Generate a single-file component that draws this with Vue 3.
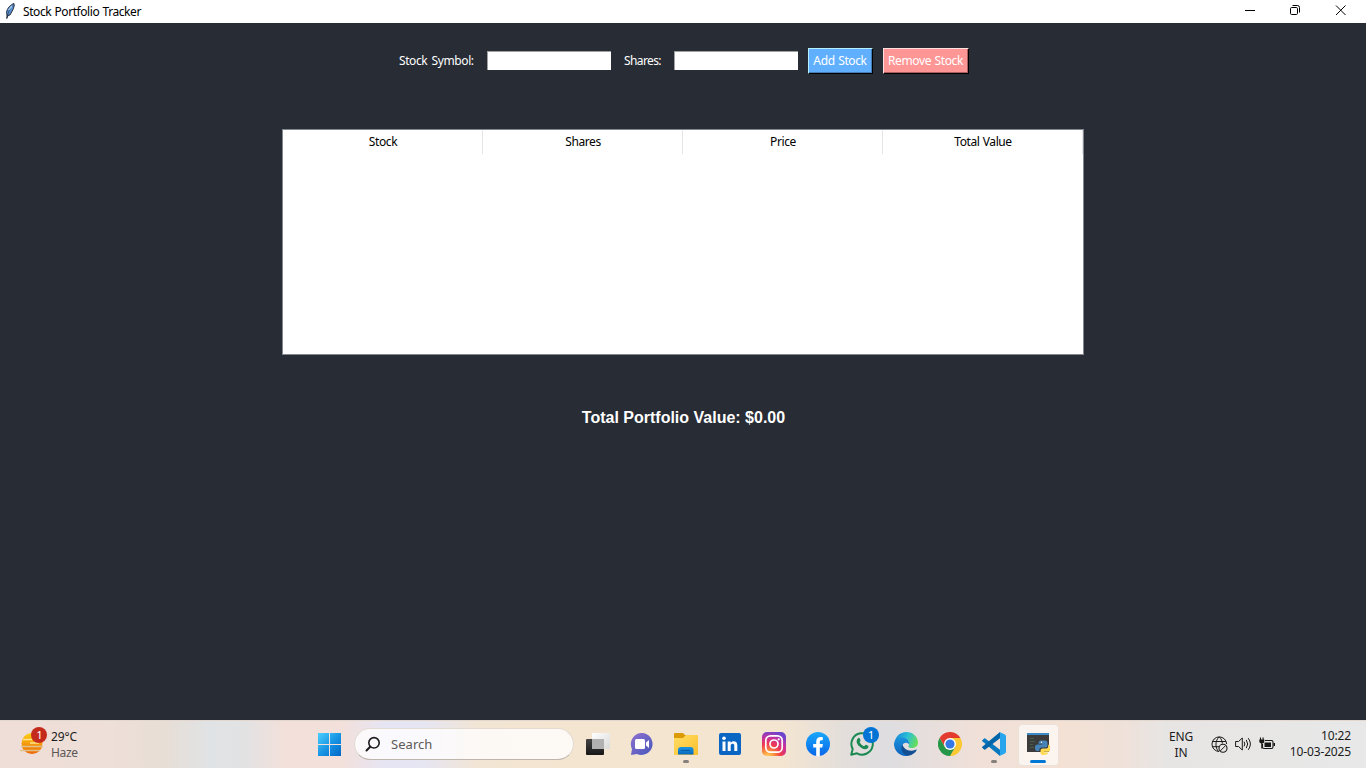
<script setup>
const columns = ['Stock', 'Shares', 'Price', 'Total Value']
</script>

<template>
  <div class="screen">
    <header class="titlebar">
      <svg class="feather" width="10" height="16" viewBox="0 0 10 16">
        <path d="M9 .5C5.500 1.500 2 5.500 1.500 9.500L2 12l-.2 3.500L3 12.500l2-.5 2.200-4L8 6.500 9.200 3z" fill="#5b91d0" stroke="#17202c" stroke-width=".9" />
        <path d="M8 2.500C5.500 5 3.500 8 2.300 13" fill="none" stroke="#17202c" stroke-width=".6" />
        <path d="M7 3L3.700 7" stroke="#a5cdf2" stroke-width="1.200" />
      </svg>
      <span class="caption">Stock Portfolio Tracker</span>
      <div class="controls">
        <svg width="46" height="22" viewBox="0 0 46 22"><path d="M18 10.500h10" stroke="#000" /></svg>
        <svg width="46" height="22" viewBox="0 0 46 22" fill="none" stroke="#000">
          <rect x="17.500" y="7.500" width="7" height="7" rx="1.200" />
          <path d="M19.500 5.500h5q2 0 2 2v5" />
        </svg>
        <svg width="46" height="22" viewBox="0 0 46 22"><path d="M17 5.500l9.500 9.500M26.500 5.500L17 15" stroke="#000" /></svg>
      </div>
    </header>

    <main class="content">
      <div class="form">
        <label class="lbl sym">Stock Symbol:</label>
        <input class="entry" type="text" />
        <label class="lbl sh">Shares:</label>
        <input class="entry" type="text" />
        <button class="btn add"><span>Add Stock</span></button>
        <button class="btn remove"><span>Remove Stock</span></button>
      </div>
      <div class="tree">
        <div class="head">
          <div v-for="c in columns" :key="c" class="col"><span>{{ c }}</span></div>
        </div>
      </div>
      <div class="total">Total Portfolio Value: $0.00</div>
    </main>

    <footer class="taskbar">
      <div class="weather">
        <svg width="30" height="32" viewBox="0 0 30 32">
          <defs>
            <linearGradient id="sun" x1="0" y1="0" x2="0" y2="1"><stop offset="0" stop-color="#fcd116" /><stop offset="1" stop-color="#ed6605" /></linearGradient>
          </defs>
          <circle cx="14" cy="16.500" r="10.500" fill="url(#sun)" />
          <path d="M5 12.500h9M12 16h9" stroke="#ffe28b" stroke-width="1.300" />
          <path d="M3 19.500h12M9 19.500h16M2 23.500h20" stroke="#dfc28a" stroke-width="1.600" />
          <circle cx="21" cy="8" r="8" fill="#c42b1c" />
          <text x="21.500" y="12" text-anchor="middle" font-size="11.500" fill="#fff">1</text>
        </svg>
        <div class="wtext"><span class="temp">29°C</span><span class="haze">Haze</span></div>
      </div>

      <div class="cell start">
        <svg width="24" height="24" viewBox="0 0 24 24">
          <defs><linearGradient id="win" x1="0" y1="0" x2="1" y2="1"><stop offset="0" stop-color="#4cd0ff" /><stop offset=".5" stop-color="#1996e4" /><stop offset="1" stop-color="#0067c8" /></linearGradient></defs>
          <path d="M0 1h11v11H0zM12 1h11v11H12zM0 13h11v11H0zM12 13h11v11H12z" fill="url(#win)" />
        </svg>
      </div>

      <div class="search">
        <svg width="16" height="16" viewBox="0 0 16 16" fill="none" stroke="#1d1d1d" stroke-width="1.600" stroke-linecap="round">
          <circle cx="9" cy="6.800" r="5.200" /><path d="M5.200 10.700L1.500 14.500" stroke-width="2" />
        </svg>
        <span>Search</span>
      </div>

      <div class="apps">
        <div class="cell">
          <svg width="24" height="24" viewBox="0 0 24 24">
            <defs>
              <linearGradient id="tv" x1="0" y1="0" x2="0" y2="1"><stop offset="0" stop-color="#444" /><stop offset="1" stop-color="#171717" /></linearGradient>
              <linearGradient id="tw" x1="0" y1="0" x2="1" y2="1"><stop offset="0" stop-color="#fff" /><stop offset="1" stop-color="#d9d9d9" /></linearGradient>
            </defs>
            <rect x="0" y="7" width="18" height="16" rx="1" fill="url(#tv)" />
            <rect x="6" y="1" width="18" height="16" rx="1" fill="url(#tw)" />
            <path d="M6 7h12v10H6z" fill="#b1b1b1" />
          </svg>
        </div>
        <div class="cell">
          <svg width="24" height="24" viewBox="0 0 24 24">
            <defs><linearGradient id="chat" x1="0" y1="0" x2="1" y2="1"><stop offset="0" stop-color="#8f71d0" /><stop offset="1" stop-color="#4757bb" /></linearGradient></defs>
            <path d="M12 1a11 11 0 1 1-5 21L1 23l1-6A11 11 0 0 1 12 1z" fill="url(#chat)" />
            <rect x="5" y="7" width="10" height="10" rx="1.500" fill="#fff" /><path d="M16 10.500l3-2.500v8l-3-2.500z" fill="#fff" />
          </svg>
        </div>
        <div class="cell">
          <svg width="24" height="24" viewBox="0 0 24 24">
            <defs>
              <linearGradient id="fold" x1="0" y1="0" x2="1" y2="1"><stop offset="0" stop-color="#ffdc62" /><stop offset="1" stop-color="#fac02d" /></linearGradient>
              <linearGradient id="fb" x1="0" y1="0" x2="0" y2="1"><stop offset="0" stop-color="#1896e1" /><stop offset="1" stop-color="#0869bd" /></linearGradient>
            </defs>
            <path d="M0 2q0-1 1-1h8l2 2h3v3H0z" fill="#dc9a05" />
            <path d="M0 6h9l3-3h11q1 0 1 1v18q0 1-1 1H1q-1 0-1-1z" fill="url(#fold)" />
            <path d="M4 22.500V18q0-3 3-3h9.500q3 0 3 3v4.500z" fill="url(#fb)" /><path d="M7 18.500h9" stroke="#075aa6" />
          </svg>
          <i class="dot"></i>
        </div>
        <div class="cell">
          <svg width="24" height="24" viewBox="0 0 24 24">
            <rect x="1" y="1" width="22" height="22" rx="2" fill="#0a66c2" />
            <path d="M4.500 9.500h3V19h-3zM9.700 9.500h3v1.400c1.300-2.400 6.600-2.300 6.600 2.100v6h-3v-5.200c0-2.700-3.600-2.600-3.600 0V19h-3z" fill="#fff" /><circle cx="6" cy="6.300" r="1.800" fill="#fff" />
          </svg>
        </div>
        <div class="cell">
          <svg width="24" height="24" viewBox="0 0 24 24">
            <defs>
              <radialGradient id="ig" cx=".25" cy="1.050" r="1.100"><stop offset="0" stop-color="#ffd768" /><stop offset=".22" stop-color="#fb9a3c" /><stop offset=".5" stop-color="#f0384f" /><stop offset=".75" stop-color="#c6319d" /><stop offset="1" stop-color="#6b45cf" /></radialGradient>
            </defs>
            <rect width="24" height="24" rx="5" fill="url(#ig)" />
            <g fill="none" stroke="#fff" stroke-width="1.700"><rect x="3.800" y="3.800" width="16.400" height="16.400" rx="4.800" /><circle cx="12" cy="12" r="4" /></g><circle cx="16.700" cy="7.300" r="1.100" fill="#fff" />
          </svg>
        </div>
        <div class="cell">
          <svg width="24" height="24" viewBox="0 0 24 24">
            <defs><linearGradient id="face" x1="0" y1="0" x2="0" y2="1"><stop offset="0" stop-color="#19a8fb" /><stop offset="1" stop-color="#0866e8" /></linearGradient></defs>
            <circle cx="12" cy="12" r="12" fill="url(#face)" />
            <path d="M10.200 24v-8.500H7.200V12h3v-2.200c0-3.700 2-5.300 6.600-4.600v3.100c-2.300-.2-3 .1-3 1.700v2h3.100l-.6 3.500h-2.500V24z" fill="#fff" />
          </svg>
        </div>
        <div class="cell">
          <svg width="24" height="24" viewBox="0 0 24 24">
            <path d="M1.200 22.800l1.500-5.800a10.700 10.700 0 1 1 4.300 4.300z" fill="none" stroke="#1a8a52" stroke-width="2" stroke-linejoin="round" />
            <path d="M7.800 6.400c1-1 1.700-.7 2.100.4l.7 1.800c0 .6-1.100 1.200-.9 1.700 1 2 2.400 3.300 4.300 4 .8 0 1.200-1.700 2-1.500l2.100 1c.8.400.3 2-.5 2.700-3 2-6.300-.3-8.300-2.200C7.400 12.400 5.200 9.200 7.800 6.400z" fill="#1a8a52" />
          </svg>
          <b class="badge">1</b>
        </div>
        <div class="cell">
          <svg width="24" height="24" viewBox="0 0 24 24">
            <defs>
              <linearGradient id="e1" x1="0" y1=".3" x2="1" y2=".6"><stop offset="0" stop-color="#1689d8" /><stop offset=".5" stop-color="#2bbfd5" /><stop offset="1" stop-color="#69df55" /></linearGradient>
              <linearGradient id="e2" x1="0" y1="0" x2="0" y2="1"><stop offset="0" stop-color="#1a91dc" /><stop offset="1" stop-color="#1063bc" /></linearGradient>
            </defs>
            <path d="M.500 10C2 3.500 7 0 12.300 0 19 0 24 5 24 10.500c0 4-3.500 5.800-7 5.500-2-.2-3-.8-2.600-1.700 1.500-2 1-6-3-7.500C7.500 5.500 3 7 .500 10z" fill="url(#e1)" />
            <path d="M0 12c.5-4.500 4-6.500 7.700-6.500 5 0 8 3.500 7.500 7C13.500 10 10 10 8.500 13c-2 5 2 9.500 6.500 10.700C7 25.500 0 19.500 0 12z" fill="url(#e2)" />
            <path d="M8.500 12.500c-3 5.500 1 10.500 6 11.200 4-.7 7-3 8.200-5.700.1-.6-.4-.6-1-.3-6 2.500-12.200-.2-13.200-5.200z" fill="#124f92" />
          </svg>
        </div>
        <div class="cell">
          <svg width="24" height="24" viewBox="0 0 24 24">
            <path d="M1.600 6A12 12 0 0 1 22.400 6H12L6.800 15z" fill="#e33b2e" />
            <path d="M22.400 6A12 12 0 0 1 12 24l5.200-9L12 6z" fill="#fcc934" />
            <path d="M1.600 6A12 12 0 0 0 12 24l5.200-9H6.800z" fill="#269746" />
            <circle cx="12" cy="12" r="6" fill="#fff" /><circle cx="12" cy="12" r="4.600" fill="#3478e5" />
          </svg>
        </div>
        <div class="cell">
          <svg width="24" height="24" viewBox="0 0 24 24">
            <path d="M.3 8.200l1.800-1.700q.6-.5 1.200 0L18 17.800v6.100L.3 9.300q-.5-.6 0-1.100z" fill="#0879bf" />
            <path d="M.3 15.800l1.800 1.700q.6.500 1.200 0L18 6.200V.1L.3 14.700q-.5.600 0 1.100z" fill="#0065a9" />
            <path d="M17.600.1l5.300 2.400q1.100.5 1.100 1.700v15.600q0 1.200-1.100 1.700l-5.300 2.400q.4-.5.400-1.200V1.300q0-.7-.4-1.200z" fill="#28a5ed" />
          </svg>
          <i class="dot"></i>
        </div>
        <div class="cell active">
          <svg width="24" height="24" viewBox="0 0 24 24">
            <path d="M1 1h22v19H1z" fill="#3b3b3b" /><path d="M1 1h22v2H1z" fill="#3b8bc8" />
            <path d="M4 6.500h4M4 9.500h5M4 12.500h3M4 15.500h4" stroke="#45604a" stroke-width="1.200" />
            <path d="M15 8.500h4q2.500 0 2.500 2.300v3q0 1.700-2 1.700h-4q-2.300 0-2.300 2.500v1h-2q-2.200 0-2.200-3.300 0-3.200 2.500-3.200h5v-.8h-4q0-3.200 2.500-3.200z" fill="#4584b9" />
            <path d="M18.500 23q-4 0-4-2.300v-2.200q0-2 2-2h3.700q2 0 2-2.200v-1.500q2.300 0 2.300 3.700 0 3.300-2.500 3.300H18v.8h4q0 2.200-3.500 2.200z" fill="#ffda50" />
            <circle cx="15.500" cy="10.300" r=".7" fill="#fff" />
          </svg>
          <i class="bar"></i>
        </div>
      </div>

      <div class="lang"><span class="eng">ENG</span><span>IN</span></div>
      <div class="tray">
        <svg width="17" height="17" viewBox="0 0 17 17" fill="none" stroke="#1a1a1a">
          <path d="M8 15.500A7.300 7.300 0 1 1 15.600 8M1.200 5.500h13.600M1.200 10.700h7M7.500 15.500C4 11.500 4 4.500 8.200.900C10.500 3 11.200 5 11.300 7.500" />
          <circle cx="12" cy="12.200" r="4" stroke-width="1.100" /><path d="M9.200 15l5.600-5.600" />
        </svg>
        <svg width="17" height="14" viewBox="0 0 17 14" fill="none" stroke="#1a1a1a" stroke-linecap="round" stroke-linejoin="round">
          <path d="M1 4.500h2.500L7.300 1v12L3.500 9.500H1zM9.300 5q1.300 2 0 4M11.500 3.200q2.600 3.800 0 7.600M13.500 1.500q4 5.500 0 11" />
        </svg>
        <svg width="17" height="14" viewBox="0 0 17 14">
          <path d="M6 3.500h6.500q1.500 0 1.500 1.500v5q0 1.500-1.500 1.500H5q-1.500 0-1.500-1.500V7" fill="none" stroke="#151515" stroke-width="1.100" />
          <path d="M5.500 5.500H12v4.500H5.500zM14.500 6h1.500v3h-1.500zM.3 2.500h5v2Q5.300 6.500 2.800 6.500T.3 4.500z" fill="#151515" />
          <path d="M1.500.500v2.500M4.100.500v2.500M2.800 6v5.500" stroke="#151515" stroke-width="1.100" />
        </svg>
      </div>
      <div class="clock"><span class="time">10:22</span><span class="date">10-03-2025</span></div>
    </footer>
  </div>
</template>

<style>
html, body { margin: 0; overflow: hidden; }
</style>

<style scoped>
* { box-sizing: border-box; }
.screen { width: 1366px; height: 768px; display: flex; flex-direction: column; background: #282c34; font-family: "Noto Sans", "Open Sans", sans-serif; font-size: 12px; overflow: hidden; }
svg { display: block; flex: none; }
.titlebar { height: 23px; flex: none; display: flex; background: #fff; color: #000; }
.feather { margin: 3px 0 0 5px; }
.caption { margin-left: 8px; line-height: 23px; letter-spacing: -.42px; word-spacing: .5px; white-space: nowrap; }
.controls { margin-left: auto; display: flex; padding-right: 1px; }
.content { flex: 1; min-height: 0; display: flex; flex-direction: column; align-items: center; }
.form { display: flex; align-items: center; width: 570px; height: 26px; margin-top: 25px; margin-left: 2px; flex: none; }
.lbl { color: #fff; white-space: nowrap; line-height: 26px; letter-spacing: -.4px; word-spacing: 1.5px; }
.sym { width: 88px; }
.sh { width: 50px; letter-spacing: -.6px; }
.entry { width: 124px; height: 19px; padding: 0 2px; margin: 0 0 1px; border: 0 solid #a0a0a0; border-width: 1px 0 0 1px; background: #fff; border-radius: 0; flex: none; outline: none; }
.entry + .sh { margin-left: 13px; }
.btn { height: 26px; margin: 0 0 0 10px; padding: 0 1px 2px 0; border: 1px solid; font: inherit; color: #fff; letter-spacing: -.38px; word-spacing: .8px; white-space: nowrap; display: flex; align-items: center; justify-content: center; border-radius: 0; flex: none; }
.add { width: 65px; background: #61afff; border-color: #b4f0ff #000 #000 #b4f0ff; box-shadow: inset -1px -1px #467db5; }
.remove { width: 86px; background: #ff9696; border-color: #ffe0e0 #000 #000 #ffe0e0; box-shadow: inset -1px -1px #aa5f5f; }
.tree { width: 802px; height: 226px; margin-top: 55px; border: 1px solid #828790; background: #fff; flex: none; }
.head { display: grid; grid-template-columns: repeat(4, 200px); height: 24px; }
.col { border-right: 1px solid #e5e5e5; padding-left: 1px; text-align: center; line-height: 24px; color: #000; letter-spacing: -.4px; word-spacing: .5px; }
.total { margin: 53px 0 0 1px; font: bold 16px/20px "Liberation Sans", Arial, sans-serif; color: #fff; white-space: nowrap; }
.taskbar { height: 48px; flex: none; display: flex; align-items: flex-start; border-top: 1px solid #e2d8d0; background: linear-gradient(90deg, #efddd8 0, #eedfd8 110px, #e7ded6 165px, #e0e3e5 210px, #e2e2e3 245px, #f3e0da 285px, #f3e0da 340px, #e6e5f4 385px, #e6e5f2 425px, #f2e5d3 480px, #f4e5d0 580px, #f4e5d0 780px, #e3dedb 845px, #dedde0 890px, #efe0d9 970px, #f4e1d4 1060px, #efe1d8 1120px, #e7e5e4 1165px, #e8e8e8 1366px); color: #1c1c1c; }
.weather { width: 307px; height: 47px; display: flex; padding-left: 18px; flex: none; }
.weather svg { margin-top: 6px; }
.wtext { display: flex; flex-direction: column; margin: 8px 0 0 3px; line-height: 16px; font-size: 12px; }
.temp { letter-spacing: -.1px; }
.haze { color: #5c5856; letter-spacing: -.35px; }
.cell { width: 44px; height: 46px; display: flex; align-items: center; justify-content: center; position: relative; flex: none; }
.start { padding-left: 2px; }
.search { width: 220px; height: 32px; margin: 7px 0 0 3px; padding-left: 10px; border-radius: 16px; border: 1px solid #e3dad2; border-bottom-color: #beb5ac; background: rgba(255, 255, 255, .78); display: flex; align-items: center; flex: none; color: #5d5a58; }
.search span { font-size: 13px; margin-left: 10px; letter-spacing: .05px; }
.apps { display: flex; flex: none; margin-left: 2px; }
.dot { position: absolute; bottom: 4px; left: 19px; width: 6px; height: 3px; border-radius: 2px; background: #85807b; }
.badge { position: absolute; left: 23px; top: 6px; width: 16px; height: 16px; border-radius: 50%; background: #0074d4; color: #fff; font-size: 11.5px; font-weight: 400; line-height: 16px; text-align: center; }
.active::before { content: ""; position: absolute; left: 2px; top: 3px; width: 39px; height: 40px; border-radius: 4px; background: rgba(255, 255, 255, .62); border: 1px solid #ece2dc; }
.active svg { position: relative; }
.bar { position: absolute; left: 14px; bottom: 4px; width: 16px; height: 3px; border-radius: 2px; background: #0078d4; }
.lang { width: 40px; margin: 8px 0 0 101px; display: flex; flex-direction: column; align-items: center; line-height: 16px; font-size: 12px; flex: none; }
.eng { letter-spacing: -.15px; }
.tray { height: 46px; display: flex; align-items: center; gap: 7px; margin-left: 10px; flex: none; }
.clock { margin: 7px 15px 0 auto; display: flex; flex-direction: column; align-items: flex-end; line-height: 16px; font-size: 12px; }
.time, .date { letter-spacing: -.15px; }
</style>
